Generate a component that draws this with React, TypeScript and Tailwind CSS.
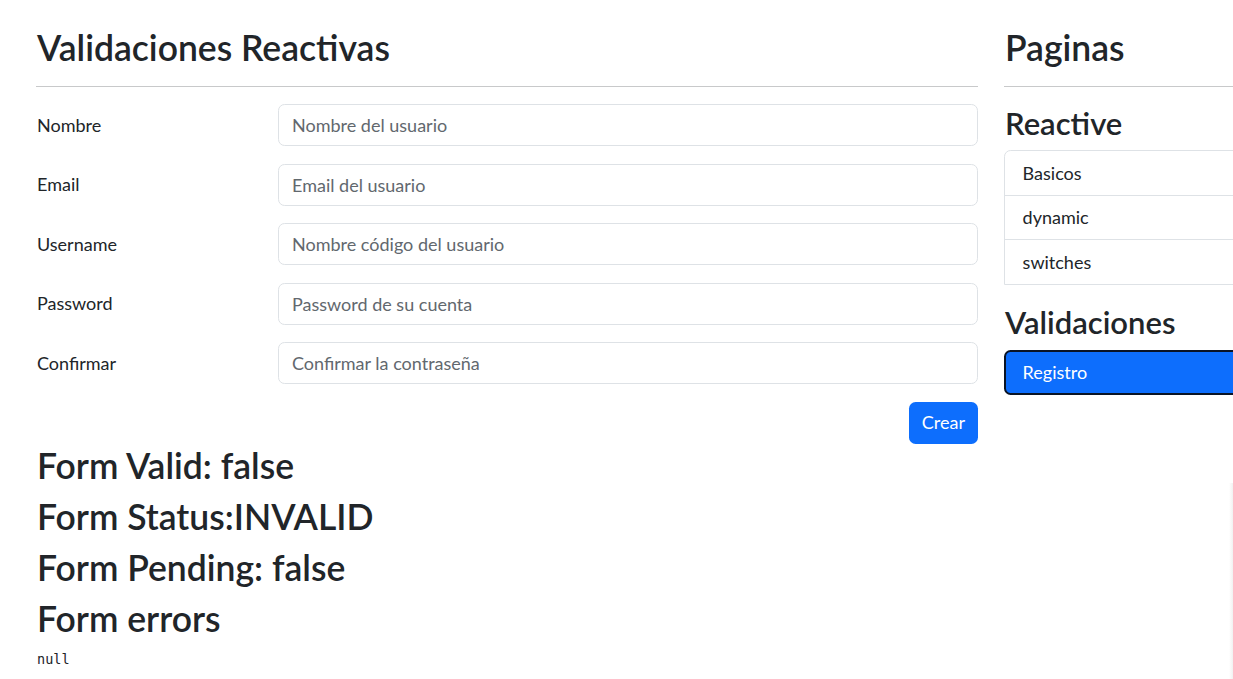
const campos = [
  { label: "Nombre", placeholder: "Nombre del usuario" },
  { label: "Email", placeholder: "Email del usuario" },
  { label: "Username", placeholder: "Nombre código del usuario" },
  { label: "Password", placeholder: "Password de su cuenta" },
  { label: "Confirmar", placeholder: "Confirmar la contraseña" },
];

const reactiveLinks = ["Basicos", "dynamic", "switches"];

export default function App() {
  return (
    <div
      className="relative h-[679px] w-[1233px] overflow-hidden bg-white text-[#212529]"
      style={{ fontFamily: "Lato, 'Noto Sans', sans-serif" }}
    >
      <div className="flex gap-[26px] pl-[36px] pt-[27px]">
        {/* formulario */}
        <div className="w-[942px] shrink-0">
          <h2 className="pl-px text-[35.5px] font-semibold leading-[42px]">Validaciones Reactivas</h2>
          <hr className="mt-[17px] border-t border-[#c8c9ca]" />

          <form className="mt-[17px]" autoComplete="off">
            {campos.map((c) => (
              <div key={c.label} className="mb-[17.6px] flex items-center">
                <label className="w-[242px] shrink-0 pl-px text-[18px]">{c.label}</label>
                <input
                  type="text"
                  placeholder={c.placeholder}
                  className="h-[42px] flex-1 rounded-[6.6px] border border-[#dee2e6] px-[13px] text-[18px] outline-none placeholder:text-[#62686e]"
                />
              </div>
            ))}
            <div className="flex justify-end">
              <button
                type="button"
                className="h-[42px] rounded-[6.6px] bg-[#0d6efd] px-[13px] text-[18px] text-white"
              >
                Crear
              </button>
            </div>
          </form>

          <div className="mt-[1px] pl-px">
            <h2 className="mb-[9px] text-[35.5px] font-semibold leading-[42px]">Form Valid: false</h2>
            <h2 className="mb-[9px] text-[35.5px] font-semibold leading-[42px]">Form Status:INVALID</h2>
            <h2 className="mb-[9px] text-[35.5px] font-semibold leading-[42px]">Form Pending: false</h2>
            <h2 className="mb-[9px] text-[35.5px] font-semibold leading-[42px]">Form errors</h2>
            <pre
              className="text-[13.5px] leading-[20px]"
              style={{ fontFamily: "'DejaVu Sans Mono', 'Liberation Mono', monospace" }}
            >
              null
            </pre>
          </div>
        </div>

        {/* menu lateral */}
        <div className="w-[320px] shrink-0">
          <h2 className="pl-px text-[35.5px] font-semibold leading-[42px]">Paginas</h2>
          <hr className="mt-[17px] border-t border-[#c8c9ca]" />

          <h3 className="mt-[17.6px] pl-px text-[31px] font-semibold leading-[37px]">Reactive</h3>
          <ul className="mt-[8.8px] divide-y divide-[#dee2e6] rounded-t-[6.6px] border border-[#dee2e6]">
            {reactiveLinks.map((l) => (
              <li key={l} className="flex h-[44.3px] items-center px-[17.6px] text-[18px]">
                {l}
              </li>
            ))}
          </ul>

          <h3 className="mt-[18.5px] pl-px text-[31px] font-semibold leading-[37px]">Validaciones</h3>
          <ul className="mt-[8.8px]">
            <li className="flex h-[45px] items-center rounded-[6.6px] border-2 border-[#0a1426] bg-[#0d6efd] px-[16.6px] text-[18px] text-white">
              Registro
            </li>
          </ul>
        </div>
      </div>

      <div className="absolute bottom-0 right-0 top-[483px] w-[4px] bg-gradient-to-r from-transparent to-[#f1f1f1]" />
    </div>
  );
}
